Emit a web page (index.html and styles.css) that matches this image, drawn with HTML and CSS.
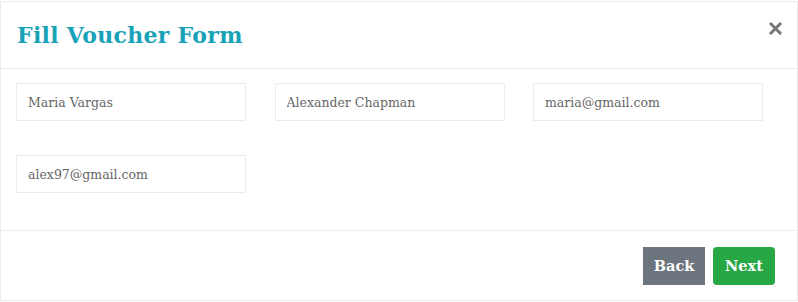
FILE: index.html
```html
<!DOCTYPE html>
<html lang="en">
<head>
  <meta charset="UTF-8">
  <title>Fill Voucher Form</title>
  <link rel="stylesheet" href="styles.css">
</head>
<body>

  <div class="modal">
    <div class="modal-header">
      <h2 class="modal-title">Fill Voucher Form</h2>
      <button class="close" type="button" aria-label="Close">
        <svg width="13" height="13" viewBox="0 0 13 13">
          <path d="M2 2 L11 11 M11 2 L2 11" stroke="#777" stroke-width="3" stroke-linecap="square"/>
        </svg>
      </button>
    </div>

    <div class="modal-body">
      <div class="form-grid">
        <input class="field" type="text" value="Maria Vargas">
        <input class="field" type="text" value="Alexander Chapman">
        <input class="field" type="text" value="maria@gmail.com">
        <input class="field" type="text" value="alex97@gmail.com">
      </div>
    </div>

    <div class="modal-footer">
      <button class="btn btn-back" type="button">Back</button>
      <button class="btn btn-next" type="button">Next</button>
    </div>
  </div>

</body>
</html>
```

FILE: styles.css
```css
* {
  margin: 0;
  padding: 0;
  box-sizing: border-box;
}

body {
  background: #fff;
  font-family: "DejaVu Serif", "Liberation Serif", serif;
  padding-top: 1px;
}

.modal {
  width: 798px;
  height: 300px;
  border: 1px solid #e9ecef;
  background: #fff;
  display: flex;
  flex-direction: column;
}

.modal-header {
  height: 67px;
  display: flex;
  align-items: center;
  justify-content: space-between;
  padding: 0 15px 0 16px;
  border-bottom: 1px solid #e9ecef;
}

.modal-title {
  font-size: 22px;
  font-weight: bold;
  color: #17a2b8;
  letter-spacing: 0.3px;
}

.close {
  border: none;
  background: none;
  display: flex;
  margin-top: -13px;
  cursor: pointer;
}

.modal-body {
  flex: 1;
  padding: 14px 15px 0;
}

.form-grid {
  display: grid;
  grid-template-columns: repeat(3, 230px);
  column-gap: 28.5px;
  row-gap: 34px;
}

.field {
  height: 38px;
  border: 1px solid #ebebeb;
  padding: 0 11px;
  font-family: "DejaVu Serif", serif;
  font-size: 12.5px;
  color: #666;
  outline: none;
}

.modal-footer {
  height: 70px;
  display: flex;
  justify-content: flex-end;
  align-items: center;
  gap: 8px;
  padding-right: 22px;
  border-top: 1px solid #e9ecef;
}

.btn {
  height: 38px;
  width: 62px;
  border: none;
  color: #fff;
  font-family: "DejaVu Serif", serif;
  font-size: 14.5px;
  font-weight: bold;
  cursor: pointer;
}

.btn-back {
  background: #6c757d;
}

.btn-next {
  background: #28a745;
  border-radius: 4px;
}
```
